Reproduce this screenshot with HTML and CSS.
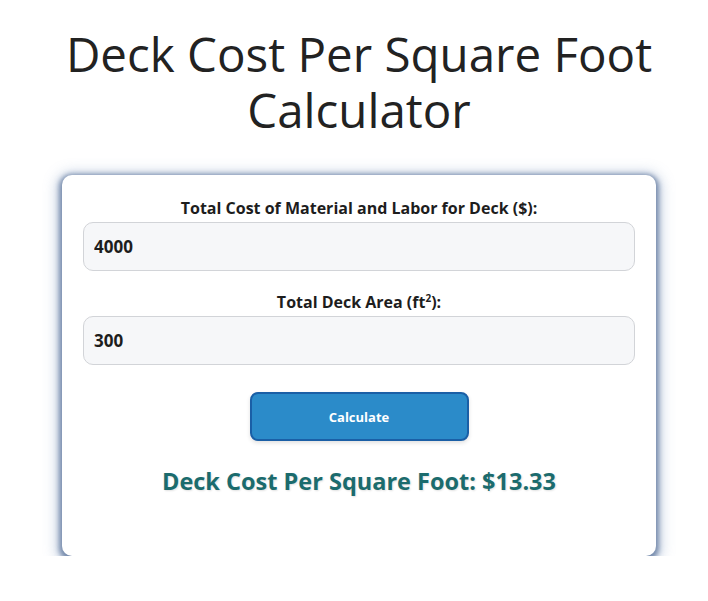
FILE: index.html
```html
<!DOCTYPE html>
<html lang="en">
<head>
<meta charset="utf-8">
<title>Deck Cost Per Square Foot Calculator</title>
<link rel="stylesheet" href="styles.css">
</head>
<body>
<main class="page">
  <h1 class="title">Deck Cost Per Square Foot Calculator</h1>
  <section class="card">
    <div class="field">
      <label class="label" for="cost">Total Cost of Material and Labor for Deck ($):</label>
      <input class="input" id="cost" type="text" value="4000">
    </div>
    <div class="field">
      <label class="label" for="area">Total Deck Area (ft<sup>2</sup>):</label>
      <input class="input" id="area" type="text" value="300">
    </div>
    <button class="btn" type="button">Calculate</button>
    <p class="result">Deck Cost Per Square Foot: $13.33</p>
  </section>
</main>
</body>
</html>
```
FILE: styles.css
```css
* { box-sizing: border-box; }
html, body { margin: 0; background: #ffffff; }
body {
  font-family: "Open Sans", "Noto Sans", sans-serif;
  color: #222;
  padding: 0 0 0 10px;
}
.page {
  display: flex;
  flex-direction: column;
  align-items: center;
}
.title {
  margin: 26px 0 0;
  width: 640px;
  text-align: center;
  font-weight: 400;
  font-size: 47.5px;
  line-height: 56px;
  color: #222;
}
.card {
  margin-top: 37px;
  width: 594px;
  height: 381px;
  background: #fff;
  border-radius: 10px;
  box-shadow: 0 2px 5px 3px rgba(85, 110, 150, 0.72), 0 3px 13px 6px rgba(110, 140, 185, 0.35);
  padding: 23px 21px 0;
  display: flex;
  flex-direction: column;
  align-items: center;
}
.field {
  width: 100%;
  display: flex;
  flex-direction: column;
  align-items: center;
  margin-bottom: 21px;
}
.label {
  font-weight: 700;
  font-size: 16px;
  line-height: 21px;
  color: #1d1d1d;
  margin-bottom: 3px;
}
.label sup {
  font-size: 10px;
  line-height: 0;
  vertical-align: baseline;
  position: relative;
  top: -0.6em;
}
.input {
  width: 100%;
  height: 49px;
  border: 1px solid #d2d4d8;
  border-radius: 10px;
  background: #f6f7f9;
  padding: 0 10px;
  font-family: inherit;
  font-weight: 700;
  font-size: 17px;
  color: #1d1d1d;
}
.btn {
  margin-top: 6px;
  width: 219px;
  height: 49px;
  border: 2px solid #1a5fa6;
  border-radius: 8px;
  background: #2b8bc9;
  color: #fff;
  font-family: inherit;
  font-weight: 700;
  font-size: 13px;
  box-shadow: 0 2px 4px rgba(0, 0, 0, 0.12);
}
.result {
  margin: 24px 0 0;
  font-weight: 700;
  font-size: 23.5px;
  line-height: 32px;
  color: #1b6b6d;
  text-shadow: 1px 1px 2px rgba(0, 0, 0, 0.12);
}
```
